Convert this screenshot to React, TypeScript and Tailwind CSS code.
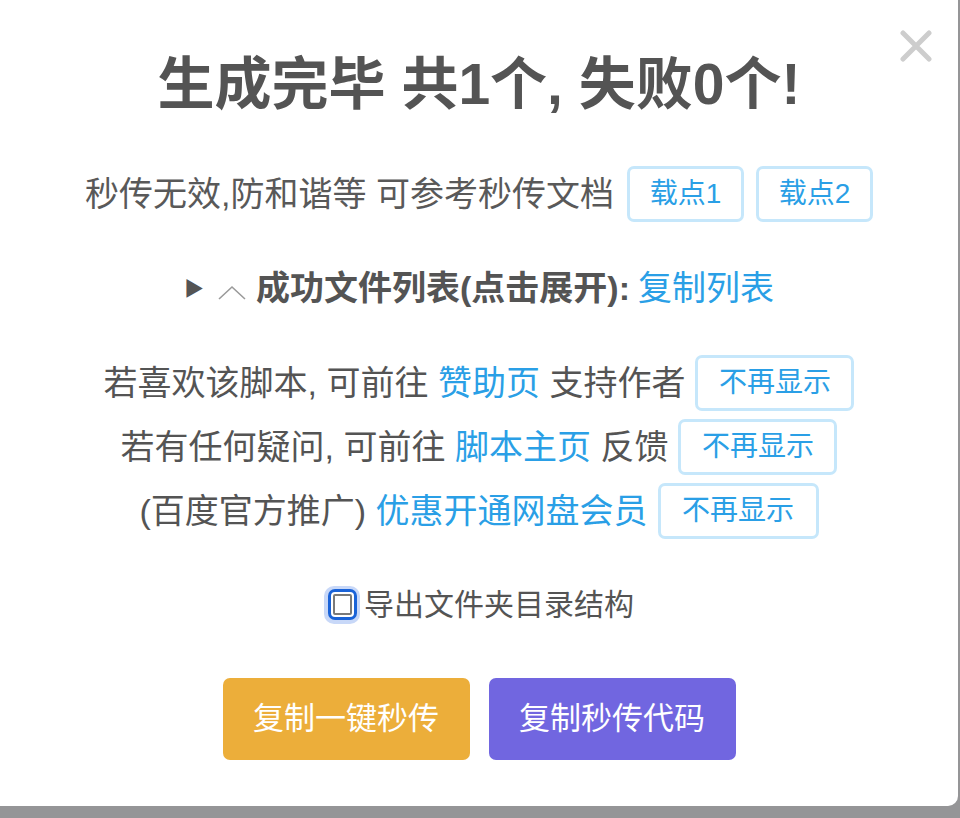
import React from "react";

const font = { fontFamily: '"Liberation Sans", "Noto Sans CJK SC", sans-serif' };

function OutlineBtn({ children, w }: { children: React.ReactNode; w: string }) {
  return (
    <span
      className={`inline-flex items-center justify-center h-[56px] ${w} border-[3px] border-[#c6e7fb] rounded-[7px] text-[#2a9fe6] text-[28px] bg-white align-middle`}
    >
      {children}
    </span>
  );
}

export default function App() {
  return (
    <div className="w-[960px] h-[818px] bg-[#959597] overflow-hidden" style={font}>
      <div className="relative w-[958px] h-[806px] bg-white rounded-br-[10px] flex flex-col items-center">
        <svg
          width="32"
          height="32"
          viewBox="0 0 32 32"
          className="absolute left-[900px] top-[30px]"
        >
          <path d="M3 3 L29 29 M29 3 L3 29" stroke="#cdcdcd" strokeWidth="5" strokeLinecap="round" />
        </svg>
        <h1 className="mt-[46px] text-[57px] leading-[76px] font-bold text-[#545454]">
          生成完毕 共1个, 失败0个!
        </h1>
        <div className="mt-[44px] flex items-center text-[34px] text-[#595959]">
          <span>秒传无效,防和谐等 可参考秒传文档</span>
          <span className="ml-[13px]"><OutlineBtn w="w-[117px]">载点1</OutlineBtn></span>
          <span className="ml-[12px]"><OutlineBtn w="w-[117px]">载点2</OutlineBtn></span>
        </div>
        <div className="mt-[41px] flex items-center text-[34px] text-[#545454]">
          <span className="text-[20px] mr-[14px]">▶</span>
          <svg width="28" height="16" viewBox="0 0 28 16" className="mr-[10px] mt-[6px]">
            <path d="M1 15 L14 3 L27 15" fill="none" stroke="#9a9a9a" strokeWidth="1.6" />
          </svg>
          <span className="font-bold">成功文件列表(点击展开):</span>
          <span className="ml-[8px] text-[#2a9fe6]">复制列表</span>
        </div>
        <div className="mt-[41px] flex flex-col items-center gap-[8px] text-[34px] text-[#545454]">
          <div className="flex items-center">
            <span>若喜欢该脚本, 可前往 <span className="text-[#2a9fe6]">赞助页</span> 支持作者</span>
            <span className="ml-[10px]"><OutlineBtn w="w-[159px]">不再显示</OutlineBtn></span>
          </div>
          <div className="flex items-center">
            <span>若有任何疑问, 可前往 <span className="text-[#2a9fe6]">脚本主页</span> 反馈</span>
            <span className="ml-[10px]"><OutlineBtn w="w-[159px]">不再显示</OutlineBtn></span>
          </div>
          <div className="flex items-center">
            <span>(百度官方推广) <span className="text-[#2a9fe6]">优惠开通网盘会员</span></span>
            <span className="ml-[10px]"><OutlineBtn w="w-[161px]">不再显示</OutlineBtn></span>
          </div>
        </div>
        <label className="mt-[43px] flex items-center text-[30px] text-[#545454]">
          <span className="w-[36px] h-[38px] rounded-[10px] bg-[#c8d8f8] flex items-center justify-center">
            <span className="w-[29px] h-[31px] rounded-[7px] border-[3px] border-[#1a63d8] flex items-center justify-center bg-white">
              <span className="w-[19px] h-[21px] rounded-[2px] border-[2px] border-[#7a7a7a] bg-white" />
            </span>
          </span>
          <span className="ml-[4px]">导出文件夹目录结构</span>
        </label>
        <div className="mt-[51px] flex gap-[19px]">
          <button className="w-[247px] h-[82px] rounded-[7px] bg-[#ecae3a] text-white text-[31px]">
            复制一键秒传
          </button>
          <button className="w-[247px] h-[82px] rounded-[7px] bg-[#7166e0] text-white text-[31px]">
            复制秒传代码
          </button>
        </div>
      </div>
    </div>
  );
}
